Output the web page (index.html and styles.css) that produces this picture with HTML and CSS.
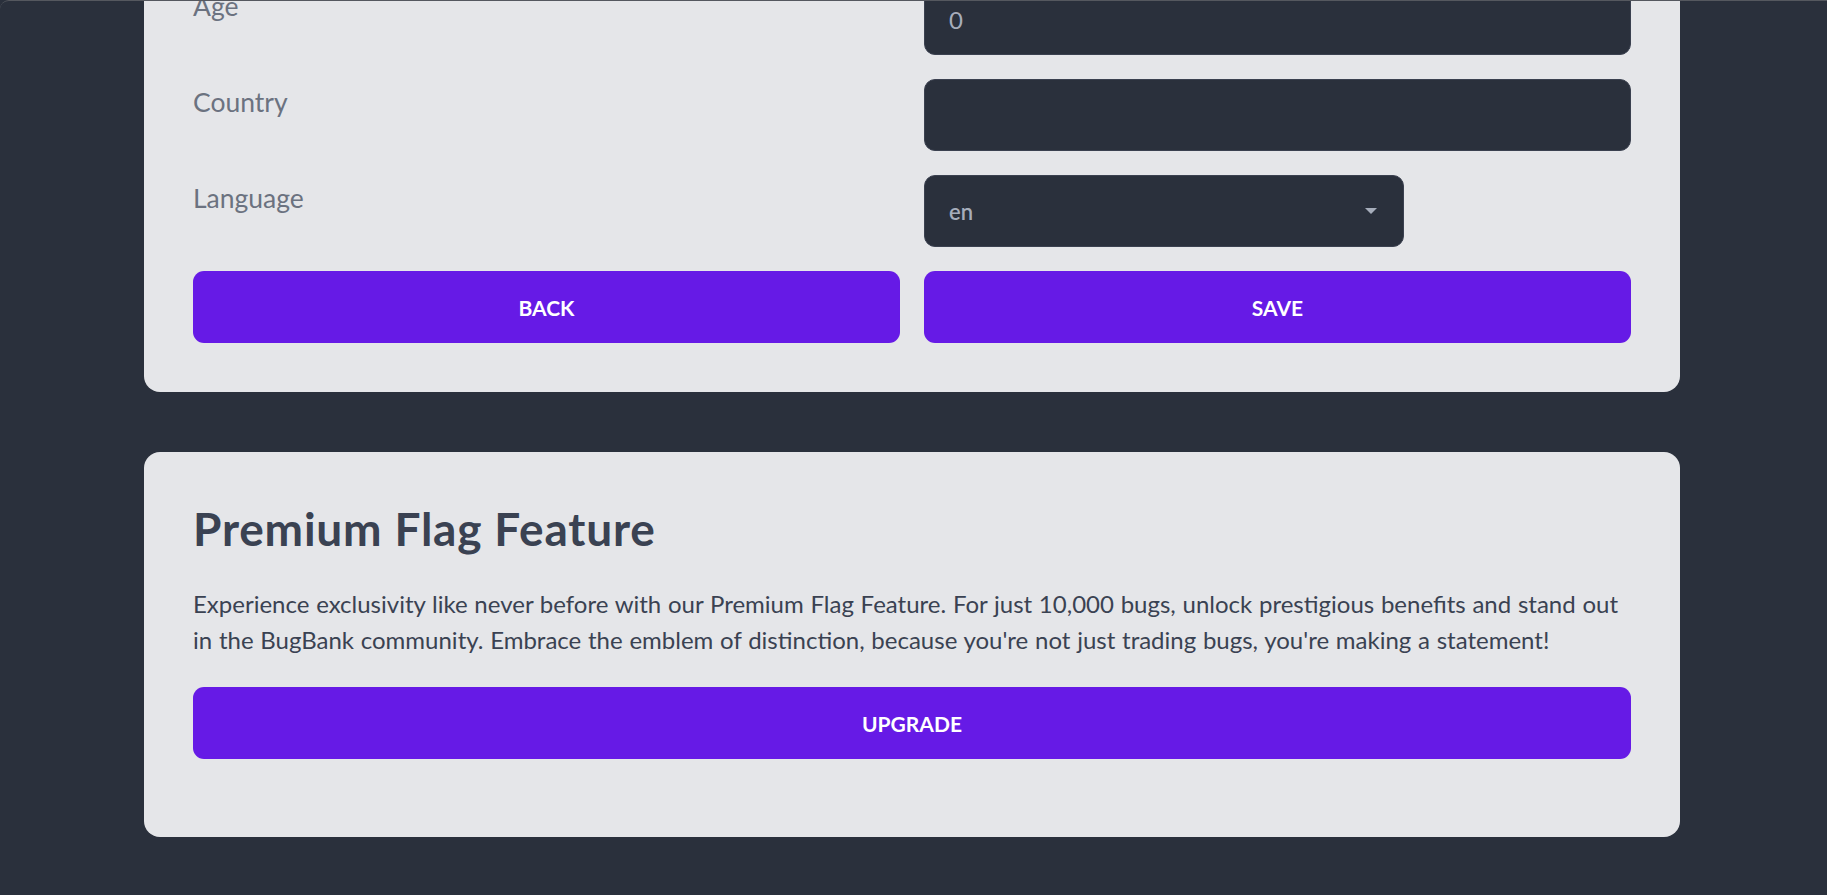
FILE: index.html
```html
<!DOCTYPE html>
<html lang="en">
<head>
<meta charset="utf-8">
<title>Profile</title>
<link rel="stylesheet" href="styles.css">
</head>
<body>
<div class="frame">
  <main class="container">
    <section class="card card--form">
      <form class="form-grid">
        <label class="field-label" for="age">Age</label>
        <input class="input" id="age" type="text" value="0">
        <label class="field-label" for="country">Country</label>
        <input class="input" id="country" type="text" value="">
        <label class="field-label" for="language">Language</label>
        <div class="select-wrap">
          <select class="select" id="language">
            <option>en</option>
          </select>
          <svg class="select-arrow" width="12" height="6" viewBox="0 0 12 6"><path d="M0 0h12L6 6z" fill="#a6adbb"/></svg>
        </div>
        <button class="btn" type="button">Back</button>
        <button class="btn" type="button">Save</button>
      </form>
    </section>
    <section class="card card--premium">
      <h2 class="card-title">Premium Flag Feature</h2>
      <p class="card-text">Experience exclusivity like never before with our Premium Flag Feature. For just 10,000 bugs, unlock prestigious benefits and stand out in the BugBank community. Embrace the emblem of distinction, because you're not just trading bugs, you're making a statement!</p>
      <button class="btn btn--block" type="button">Upgrade</button>
    </section>
  </main>
</div>
</body>
</html>
```
FILE: styles.css
```css
* {
  box-sizing: border-box;
}

html,
body {
  margin: 0;
  padding: 0;
  background: #2a303c;
  height: 100%;
  overflow: hidden;
}

body {
  font-family: Lato, "Liberation Sans", sans-serif;
}

.frame {
  min-height: 100%;
  background: #2a303c;
  padding-right: 3px;
}

.frame::before {
  content: "";
  position: fixed;
  top: 0;
  left: 0;
  right: 0;
  height: 12px;
  border-top: 1px solid #55585f;
  border-top-left-radius: 9px;
  z-index: 10;
  pointer-events: none;
}

.container {
  width: 1536px;
  margin: 0 auto;
  display: flex;
  flex-direction: column;
  gap: 60px;
}

.card {
  background: #e5e6e9;
  border-radius: 16px;
  padding: 48px 49px;
}

.card--form {
  margin-top: -65px;
  padding-bottom: 49px;
}

.form-grid {
  display: grid;
  grid-template-columns: 1fr 1fr;
  column-gap: 24px;
  row-gap: 24px;
  align-items: start;
}

.field-label {
  color: #6b7280;
  font-size: 26.5px;
  line-height: 36px;
  padding-top: 5px;
}

.input,
.select {
  display: block;
  width: 100%;
  height: 72px;
  background: #2a303c;
  border: 1px solid #3b4150;
  border-radius: 11px;
  padding: 0 24px;
  font-family: inherit;
  font-size: 24px;
  color: #a6adbb;
  outline: none;
}

.select-wrap {
  position: relative;
  max-width: 480px;
}

.select {
  appearance: none;
  -webkit-appearance: none;
  font-size: 22px;
  font-weight: 600;
}

.select-arrow {
  position: absolute;
  right: 27px;
  top: 33px;
  pointer-events: none;
}

.btn {
  display: flex;
  align-items: center;
  justify-content: center;
  height: 72px;
  border: none;
  border-radius: 11px;
  background: #661ae6;
  color: #ffffff;
  font-family: inherit;
  font-size: 21px;
  font-weight: 700;
  text-transform: uppercase;
  cursor: pointer;
}

.btn--block {
  width: 100%;
}

.card--premium {
  padding-bottom: 78px;
}

.card-title {
  margin: 2px 0 0;
  color: #3a4252;
  font-size: 46px;
  line-height: 54px;
  font-weight: 700;
  letter-spacing: 0.8px;
}

.card-text {
  margin: 30px 0 29px;
  color: #3a4252;
  font-size: 24px;
  line-height: 36px;
  word-spacing: 0.6px;
}
```
